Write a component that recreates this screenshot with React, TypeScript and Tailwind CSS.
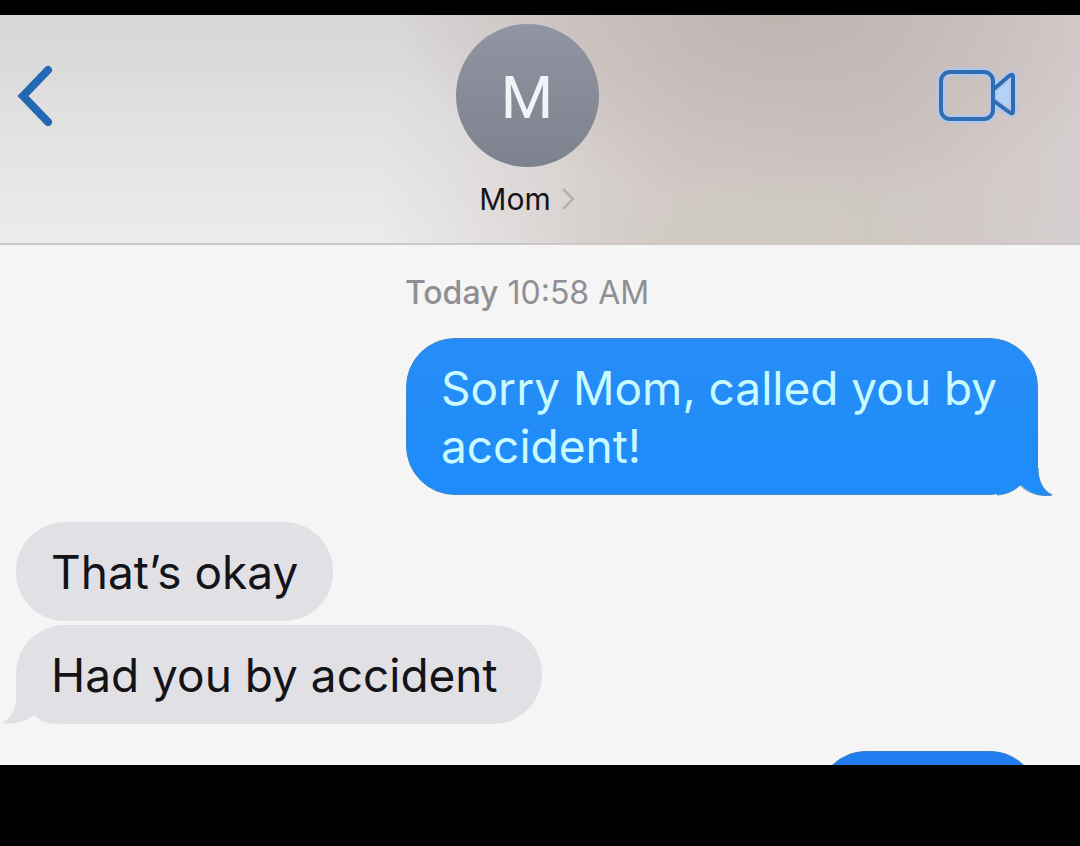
import type { ReactNode } from 'react';

type Side = 'sent' | 'received';

function BubbleTail({ side }: { side: Side }) {
  if (side === 'sent') {
    return (
      <svg viewBox="0 0 56 52" className="absolute -right-4 -bottom-0.5 h-[52px] w-14" aria-hidden="true">
        <path d="M0 51 C10 50 17 47 23 41 C31 49 43 53 55 51 C45 46 41 36 41 24 L41 0 L6 0 Z" fill="#1e8cf9" />
        <path d="M0 52 C10 51 18 47 24 41 C31 48 40 51 48 52 Z" fill="#f5f5f6" />
        <path d="M0 51 C10 50 17 47 23 41 C31 49 43 53 55 51 C45 46 41 36 41 24" fill="none" stroke="#4585bd" strokeWidth="1" />
      </svg>
    );
  }
  return (
    <svg viewBox="0 0 56 52" className="absolute -bottom-px -left-[15px] h-[52px] w-14" aria-hidden="true">
      <path d="M56 51 C44 51 38 47 33 42 C24 49 13 52 1 50 C11 45 15 36 15 24 L15 0 L50 0 Z" fill="#e1e0e5" />
      <path d="M56 52 C44 51 38 47 33 42 C26 48 19 50 10 52 Z" fill="#f5f5f6" />
    </svg>
  );
}

function Bubble({ side, tail, children }: { side: Side; tail?: boolean; children: ReactNode }) {
  const look =
    side === 'sent'
      ? 'self-end max-w-[632px] border border-[#3f88d0] bg-[#1e8cf9] bg-linear-to-b from-[#278df6] to-[#1d8cfa] text-[#c9faff] px-[34px] pt-5 pb-[19px]'
      : `self-start bg-[#e1e0e5] text-[#141318] pt-[21px] pb-5 pl-[35px] ${tail ? 'pr-11' : 'pr-[35px]'}`;
  return (
    <div className={`relative rounded-[49px] text-[46px] leading-[58px] ${look}`}>
      {tail && <BubbleTail side={side} />}
      <p className="relative">{children}</p>
    </div>
  );
}

export default function App() {
  return (
    <div className="flex min-h-screen flex-col bg-black pt-[15px] font-['Inter',sans-serif]">
      <header className="grid grid-cols-[1fr_auto_1fr] items-start border-b-2 border-[#cbc8c8] bg-[radial-gradient(ellipse_380px_190px_at_72%_0%,#c0b4b1_0%,#c0b4b100_100%),radial-gradient(ellipse_260px_120px_at_72%_95%,#d0cbc3_0%,#d0cbc300_100%),linear-gradient(95deg,#d2c8c600_36%,#d2c8c6_64%,#cdc4c2_80%,#d6cfcf_100%),linear-gradient(180deg,#d7d5d6_0%,#e2e2e2_50%,#ececec_100%)] bg-origin-border pt-[9px] pr-[42px] pb-[26px] pl-4">
        <button type="button" aria-label="Back" className="mt-[41px] w-10 justify-self-start">
          <svg viewBox="0 0 40 62" className="h-[62px] w-10" fill="none" stroke="#2268b2" strokeWidth="8" strokeLinecap="round" strokeLinejoin="miter" aria-hidden="true">
            <path d="M32 5 L7 31 L32 57" />
          </svg>
        </button>
        <button type="button" className="flex flex-col items-center">
          <span className="flex size-[143px] items-center justify-center rounded-full bg-linear-to-b from-[#9195a3] to-[#7e828e] pt-1 font-['Roboto',sans-serif] text-[60px] text-[#f3f3fa]">
            M
          </span>
          <span className="mt-3.5 flex items-center gap-2.5 text-[30px] leading-9 text-[#161416]">
            Mom
            <svg viewBox="0 0 14 22" className="h-[22px] w-3.5" fill="none" stroke="#b5b0b1" strokeWidth="2.5" aria-hidden="true">
              <path d="M2 1 L12 11 L2 21" />
            </svg>
          </span>
        </button>
        <button type="button" aria-label="Video call" className="mt-[45px] mr-[22px] justify-self-end">
          <svg viewBox="0 0 78 52" className="h-[52px] w-[78px] overflow-visible" fill="none" strokeLinejoin="round" aria-hidden="true">
            <g stroke="#b0c8ee" strokeWidth="8">
              <path d="M56 20 L71 7 Q75 4 75 8 V42 Q75 46 71 43 L56 32" fill="#b3d2f5" />
              <rect x="3" y="3" width="52" height="47" rx="9" />
            </g>
            <g stroke="#2f6cb0" strokeWidth="4">
              <path d="M56 20 L71 7 Q75 4 75 8 V42 Q75 46 71 43 L56 32" />
              <rect x="3" y="3" width="52" height="47" rx="9" />
            </g>
          </svg>
        </button>
      </header>

      <main className="flex flex-col bg-[#f5f5f6] pt-[30px] pr-[42px] pl-4">
        <p className="text-center text-[32px] leading-9 text-[#8f8f94]">
          <span className="font-medium">Today</span> 10:58 AM
        </p>
        <div className="mt-[27px] flex flex-col">
          <Bubble side="sent" tail>
            Sorry Mom, called you by accident!
          </Bubble>
        </div>
        <div className="mt-[27px] flex flex-col gap-1">
          <Bubble side="received">That’s okay</Bubble>
          <Bubble side="received" tail>
            Had you by accident
          </Bubble>
        </div>
        <div className="mt-[27px] flex h-3.5 justify-end overflow-hidden">
          <div className="h-24 w-[220px] rounded-[48px] border-t border-[#3f7fc0] bg-[#1f7df0]" />
        </div>
      </main>
    </div>
  );
}
